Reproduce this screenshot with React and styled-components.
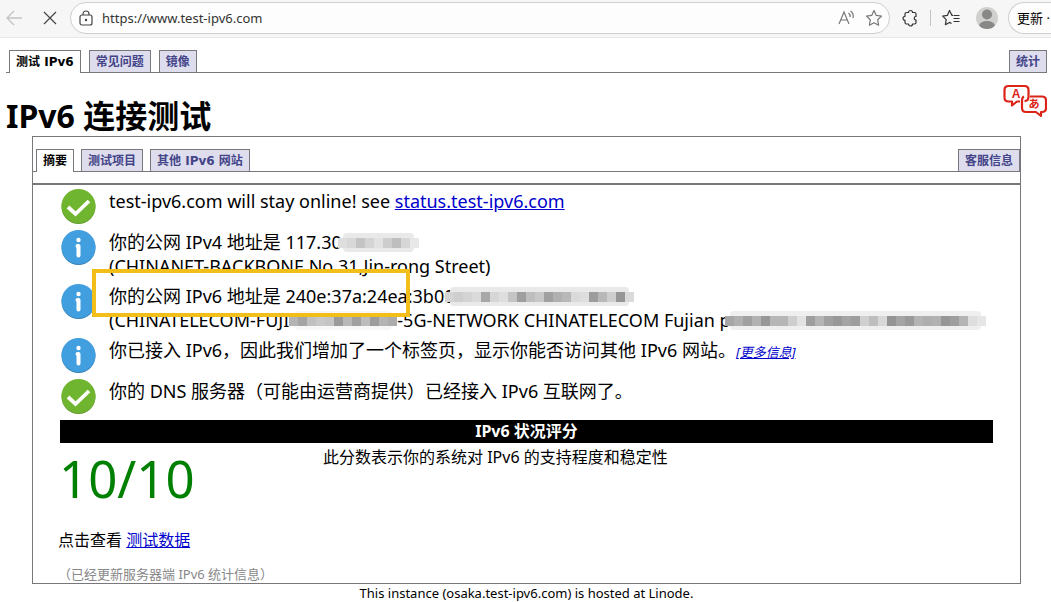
import React from "react";
import styled, { createGlobalStyle } from "styled-components";

const Global = createGlobalStyle`
  * { box-sizing: border-box; }
  body {
    margin: 0;
    background: #fff;
    color: #000;
    font-family: "Noto Sans", "Noto Sans CJK SC", sans-serif;
    font-size: 16px;
  }
  button { font: inherit; color: inherit; background: none; border: 0; padding: 0; cursor: pointer; }
  a { color: #0000cc; }
`;

const Page = styled.div`
  overflow-x: hidden;
`;

const Toolbar = styled.header`
  display: flex;
  align-items: center;
  height: 38px;
  padding: 1px 0 3px 4px;
  background: #f6f6f6;
  border-bottom: 1px solid #e9e9e9;
`;

const IconButton = styled.button`
  display: flex;
  flex: none;
  align-items: center;
  justify-content: center;
  width: ${(p) => p.$w || 20}px;
  height: 24px;
  margin-left: ${(p) => p.$gap || 0}px;
`;

const AddressBar = styled.div`
  display: flex;
  flex: 1;
  align-items: center;
  height: 32px;
  margin-left: 10px;
  padding: 0 5px;
  border: 1px solid #cfcfcf;
  border-radius: 16px;
  background: #fdfdfd;
`;

const UrlInput = styled.input`
  flex: 1;
  min-width: 0;
  margin-left: 6px;
  padding: 0;
  border: 0;
  outline: 0;
  background: transparent;
  color: #333;
  font: 13px "Noto Sans", sans-serif;
`;

const Divider = styled.span`
  width: 1px;
  height: 16px;
  margin-left: 10px;
  background: #c4c4c4;
`;

const UpdateButton = styled.button`
  flex: none;
  width: 43px;
  height: 32px;
  margin-left: 9px;
  padding-left: 8px;
  border: 1px solid #cfcfcf;
  border-right: 0;
  border-radius: 16px 0 0 16px;
  background: #fdfdfd;
  font-size: 13px;
  text-align: left;
  white-space: nowrap;
  overflow: hidden;
`;

const TabBar = styled.nav`
  display: flex;
  align-items: flex-end;
  gap: ${(p) => p.$gap}px;
  padding-left: 3px;
  border-bottom: 1px solid #77777c;
`;

const Tab = styled.a`
  height: ${(p) => (p.$active ? 23 : 22)}px;
  margin-bottom: ${(p) => (p.$active ? -1 : 0)}px;
  margin-left: ${(p) => (p.$end ? "auto" : 0)};
  padding: 0 6px;
  border: 1px solid #77777c;
  border-bottom: 0;
  background: ${(p) => (p.$active ? "#fff" : "#ddddee")};
  color: ${(p) => (p.$active ? "#000" : "#444488")};
  font: bold 12px/22px "DejaVu Sans", "Noto Sans CJK SC", sans-serif;
  text-decoration: none;
  white-space: nowrap;
`;

const Main = styled.main`
  padding: 12px 4px 0 6px;
`;

const TitleRow = styled.div`
  display: flex;
  justify-content: space-between;
  align-items: flex-start;
  height: 63px;
  padding-top: 11px;
`;

const Title = styled.h1`
  margin: 10px 0 0;
  font-size: 32px;
  line-height: 44px;
  white-space: nowrap;
`;

const Panel = styled.section`
  margin: 0 26px;
  padding-top: 12px;
  border: 1px solid #77777c;
`;

const Results = styled.div`
  margin-top: 11px;
  padding: 4px 27px 0 25px;
  border-top: 2px solid #77777c;
`;

const ResultList = styled.ul`
  display: flex;
  flex-direction: column;
  gap: 6px;
  margin: 0;
  padding: 0;
  list-style: none;
`;

const Result = styled.li`
  position: relative;
  display: flex;
  align-items: flex-start;
  gap: 13px;
  padding-left: 3px;
  font-size: 18px;
  line-height: 24px;
  white-space: nowrap;
`;

const MoreLink = styled.a`
  font-size: 13px;
  font-style: italic;
  line-height: 18px;
`;

const Highlight = styled.div`
  position: absolute;
  top: -15px;
  left: 34px;
  width: 318px;
  height: 48px;
  border: 4px solid #f2be1a;
`;

const Redaction = styled.svg`
  display: inline-block;
  margin-left: ${(p) => p.$overlap}px;
  vertical-align: -4px;
`;

const ScoreHeading = styled.h2`
  margin: 6px 0 0 2px;
  background: #000;
  color: #fff;
  font-size: 16px;
  line-height: 23px;
  text-align: center;
`;

const ScoreRow = styled.div`
  display: grid;
  grid-template-columns: 265px 1fr;
  height: 82px;
`;

const Score = styled.div`
  padding-left: 1px;
  color: #008000;
  font-size: 51px;
  line-height: 70px;
`;

const ScoreNote = styled.p`
  margin: 2px 0 0;
  line-height: 24px;
`;

const DataLine = styled.p`
  margin: 3px 0 0;
  line-height: 24px;
`;

const StatsLine = styled.p`
  margin: 13px 0 0;
  color: #888;
  font-size: 13px;
  line-height: 18px;
`;

const Footer = styled.footer`
  font-size: 13px;
  line-height: 18px;
  text-align: center;
`;

const OkIcon = () => (
  <svg width="35" height="35" viewBox="0 0 35 35" aria-hidden="true">
    <circle cx="17.5" cy="18" r="17" fill="#5f9a2b" />
    <circle cx="17.5" cy="17" r="17" fill="#70b52f" />
    <path d="M7 18l7.500 7L28 12" fill="none" stroke="#fff" strokeWidth="3.800" />
  </svg>
);

const InfoIcon = () => (
  <svg width="35" height="35" viewBox="0 0 35 35" aria-hidden="true">
    <circle cx="17.5" cy="18" r="17" fill="#3681b7" />
    <circle cx="17.5" cy="17" r="17" fill="#429fdf" />
    <circle cx="17.5" cy="10" r="2.2" fill="#fff" />
    <path d="M16.500 16h1v9.500" fill="none" stroke="#fff" strokeWidth="4" strokeLinecap="round" strokeLinejoin="round" />
  </svg>
);

const CELL = 9;

/* Pixelated cover over hidden digits: a faint band with a darker row of cells through its middle. */
const Mosaic = ({ tones, overlap = 0, faint = "#e9e9e9" }) => {
  const width = tones.length * CELL;
  return (
    <Redaction $overlap={overlap} width={width} height="21" aria-hidden="true">
      <rect x="5" y="1" width={width - 10} height="19" rx="4" fill={faint} />
      {tones.map((t, i) => (
        <rect key={i} x={i * CELL} y="6" width={CELL} height="10" fill={`rgb(${t},${t},${t})`} />
      ))}
    </Redaction>
  );
};

const BackIcon = () => (
  <svg width="18" height="16" viewBox="0 0 18 16" fill="none" stroke="#c3c3c3" strokeWidth="1.300"><path d="M17 8H2M9 1L2 8l7 7" /></svg>
);
const StopIcon = () => (
  <svg width="14" height="14" viewBox="0 0 14 14" fill="none" stroke="#444" strokeWidth="1.200"><path d="M1 1l12 12M13 1L1 13" /></svg>
);
const LockIcon = () => (
  <svg width="14" height="16" viewBox="0 0 14 16" fill="none" stroke="#444" strokeWidth="1.200">
    <rect x="1" y="5" width="12" height="10" rx="2" /><path d="M4 5V4a3 3 0 0 1 6 0v1" /><circle cx="7" cy="10" r="0.600" fill="#444" />
  </svg>
);
const ReadIcon = () => (
  <svg width="18" height="16" viewBox="0 0 18 16" fill="none" stroke="#777" strokeWidth="1.200">
    <path d="M1 14L6 2L11 14M3 10h6.500M10.500 3q2 1.500 1.500 4M12.500 1q3.500 2.500 2.500 7" />
  </svg>
);
const StarIcon = () => (
  <svg width="18" height="18" viewBox="0 0 18 18" fill="none" stroke="#777" strokeWidth="1.200" strokeLinejoin="round">
    <path d="M9 1.500l2.300 4.900 5.200.7-3.800 3.700.9 5.400L9 13.700l-4.600 2.500.9-5.400L1.500 7.100l5.200-.7z" />
  </svg>
);
const PuzzleIcon = () => (
  <svg width="18" height="18" viewBox="0 0 18 18" fill="none" stroke="#333" strokeWidth="1.200" strokeLinejoin="round">
    <path d="M5.500 3.500h2a2 2 0 0 1 4 0h2q1.500 0 1.500 1.500v2.500a1.600 1.600 0 0 0 0 3.500v2.500q0 1.500-1.500 1.500h-2a2 2 0 0 1-4 0h-2Q4 15 4 13.500V11.300a2 2 0 0 1 0-4V5q0-1.500 1.500-1.500z" />
  </svg>
);
const FavoritesIcon = () => (
  <svg width="18" height="18" viewBox="0 0 18 18" fill="none" stroke="#333" strokeWidth="1.200" strokeLinejoin="round">
    <path d="M11 6.400H10L7.500 1.500 5.300 6.400l-4.600.7 3.500 3.500-.8 5.100 4.100-2.300 2 1.100M11.500 6.500h6M11.500 9.500h6M11.500 12.500h6" />
  </svg>
);
const ProfileIcon = () => (
  <svg width="24" height="24" viewBox="0 0 24 24">
    <defs><clipPath id="avatar"><circle cx="12" cy="12" r="11" /></clipPath></defs>
    <circle cx="12" cy="12" r="11" fill="#d0d0ce" />
    <g clipPath="url(#avatar)" fill="#888886"><circle cx="12" cy="8.500" r="5" /><ellipse cx="12" cy="20" rx="8" ry="5" /></g>
  </svg>
);
const LanguageIcon = () => (
  <svg width="44" height="34" viewBox="0 0 44 34" fill="none" stroke="#dc2318" strokeWidth="2.200" strokeLinejoin="round">
    <path d="M17 17.500H14l-5 4v-4H5.500q-4 0-4-4V6q0-4 4-4h16q4 0 4 4v7q0 4-4 4" />
    <path d="M27 12.500h12q4 0 4 4V24q0 4-4 4h-1v4l-5-4H23q-4 0-4-4v-7.500q0-3 2-4" />
    <text x="13" y="14" textAnchor="middle" fontSize="12" fontWeight="bold" fontFamily="Liberation Sans, sans-serif" fill="#dc2318" stroke="none">A</text>
    <text x="31" y="24" textAnchor="middle" fontSize="11" fontWeight="bold" fontFamily="Noto Sans CJK JP, sans-serif" fill="#dc2318" stroke="none">あ</text>
  </svg>
);

export default function App() {
  return (
    <Page>
      <Global />
      <Toolbar>
        <IconButton aria-label="返回"><BackIcon /></IconButton>
        <IconButton $gap={16} aria-label="停止"><StopIcon /></IconButton>
        <AddressBar>
          <IconButton aria-label="网站信息"><LockIcon /></IconButton>
          <UrlInput aria-label="地址" defaultValue="https://www.test-ipv6.com" />
          <IconButton aria-label="朗读"><ReadIcon /></IconButton>
          <IconButton $gap={7} aria-label="收藏"><StarIcon /></IconButton>
        </AddressBar>
        <IconButton $gap={10} aria-label="扩展"><PuzzleIcon /></IconButton>
        <Divider />
        <IconButton $gap={10} aria-label="收藏夹"><FavoritesIcon /></IconButton>
        <IconButton $gap={14} $w={24} aria-label="个人资料"><ProfileIcon /></IconButton>
        <UpdateButton>更新 ·</UpdateButton>
      </Toolbar>
      <Main>
        <TabBar $gap={8}>
          <Tab href="#test" $active>测试 IPv6</Tab>
          <Tab href="#faq">常见问题</Tab>
          <Tab href="#mirrors">镜像</Tab>
          <Tab href="#stats" $end>统计</Tab>
        </TabBar>
        <TitleRow>
          <Title>IPv6 连接测试</Title>
          <button aria-label="语言"><LanguageIcon /></button>
        </TitleRow>
        <Panel>
          <TabBar $gap={7}>
            <Tab href="#summary" $active>摘要</Tab>
            <Tab href="#tests">测试项目</Tab>
            <Tab href="#sites">其他 IPv6 网站</Tab>
            <Tab href="#help" $end>客服信息</Tab>
          </TabBar>
          <Results>
            <ResultList>
              <Result><OkIcon /><div>test-ipv6.com will stay online! see <a href="#status">status.test-ipv6.com</a></div></Result>
              <Result>
                <InfoIcon />
                <div>
                  <div>你的公网 IPv4 地址是 117.30<Mosaic overlap={-4} tones={[222, 216, 196, 212, 226, 205, 190, 214, 232]} /></div>
                  <div>(CHINANET-BACKBONE No.31,Jin-rong Street)</div>
                </div>
              </Result>
              <Result>
                <InfoIcon />
                <div>
                  <div>你的公网 IPv6 地址是 240e:37a:24ea:3b00<Mosaic overlap={-9} tones={[212, 206, 212, 218, 168, 214, 222, 196, 158, 190, 200, 160, 176, 184, 218, 222, 156, 184, 206, 150, 218]} /></div>
                  <div>(CHINATELECOM-FUJI<Mosaic faint="#f7f7f7" tones={[180, 164, 192, 200, 196, 154, 184, 160, 188, 156, 180, 172]} />-5G-NETWORK CHINATELECOM Fujian p<Mosaic overlap={-6} faint="#efefef" tones={[166, 176, 160, 178, 152, 182, 182, 206, 226, 158, 180, 160, 152, 164, 158, 208, 190, 216, 148, 164, 154, 180, 174, 178, 150, 158, 180, 222, 230]} /></div>
                </div>
                <Highlight />
              </Result>
              <Result><InfoIcon /><div>你已接入 IPv6，因此我们增加了一个标签页，显示你能否访问其他 IPv6 网站。<MoreLink href="#more">[更多信息]</MoreLink></div></Result>
              <Result><OkIcon /><div>你的 DNS 服务器（可能由运营商提供）已经接入 IPv6 互联网了。</div></Result>
            </ResultList>
            <ScoreHeading>IPv6 状况评分</ScoreHeading>
            <ScoreRow>
              <Score>10/10</Score>
              <ScoreNote>此分数表示你的系统对 IPv6 的支持程度和稳定性</ScoreNote>
            </ScoreRow>
            <DataLine>点击查看 <a href="#data">测试数据</a></DataLine>
            <StatsLine>（已经更新服务器端 IPv6 统计信息）</StatsLine>
          </Results>
        </Panel>
        <Footer>This instance (osaka.test-ipv6.com) is hosted at Linode.</Footer>
      </Main>
    </Page>
  );
}
